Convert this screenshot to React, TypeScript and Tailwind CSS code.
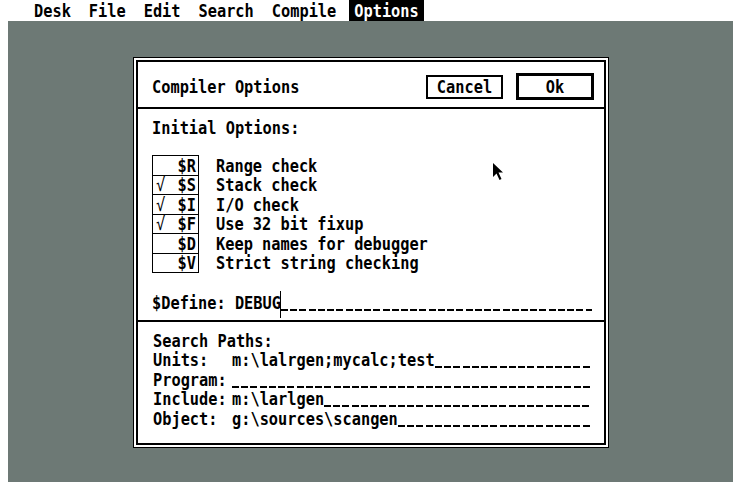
const mono = "font-['DejaVu_Sans_Mono','Liberation_Mono',monospace] font-bold";

const menuItems = ['Desk', 'File', 'Edit', 'Search', 'Compile', 'Options'];

const switches = [
  { code: '$R', label: 'Range check', on: false },
  { code: '$S', label: 'Stack check', on: true },
  { code: '$I', label: 'I/O check', on: true },
  { code: '$F', label: 'Use 32 bit fixup', on: true },
  { code: '$D', label: 'Keep names for debugger', on: false },
  { code: '$V', label: 'Strict string checking', on: false },
];

const paths = [
  { label: 'Units:', value: 'm:\\lalrgen;mycalc;test' },
  { label: 'Program:', value: '' },
  { label: 'Include:', value: 'm:\\larlgen' },
  { label: 'Object:', value: 'g:\\sources\\scangen' },
];

// atari system font is taller than it is wide
function T({ children, className = '' }: { children: React.ReactNode; className?: string }) {
  return <span className={`inline-block whitespace-pre scale-y-[1.18] translate-y-[1px] ${className}`}>{children}</span>;
}

function Field({ value, cursor }: { value: string; cursor?: boolean }) {
  return (
    <div className="relative flex-1 flex">
      {value && <T>{value}</T>}
      {cursor && <span className="absolute left-[45px] top-[-2px] h-[27px] w-px bg-black" />}
      <span className="flex-1 h-[19.4px] bg-no-repeat bg-[length:100%_2px] bg-[position:0_16px] bg-[repeating-linear-gradient(90deg,#000_0_7px,transparent_7px_9.23px)]" />
    </div>
  );
}

function Pointer() {
  return (
    <svg className="absolute left-[358px] top-[104px]" width="12" height="20" viewBox="0 0 12 20">
      <path d="M1 1 L1 15 L4.5 11.5 L7.5 18 L9.5 17 L6.5 10.5 L11 10.5 Z" fill="black" />
    </svg>
  );
}

export default function App() {
  return (
    <div className={`w-[741px] h-[488px] bg-white overflow-hidden text-black ${mono} text-[15.3px] leading-[19.4px]`}>
      <div className="h-[21px] flex items-center pl-[29px]">
        {menuItems.map((m) => (
          <span
            key={m}
            className={`px-[5px] h-[21px] flex items-center mr-[8px] ${m === 'Options' ? 'bg-black text-white' : ''}`}
          >
            <T>{m}</T>
          </span>
        ))}
      </div>

      <div className="mx-[8px] h-[461px] bg-[#6d7975] pl-[125px] pt-[36px]">
        <div className="relative w-[476px] h-[391px] border border-black bg-white p-[2px]">
          <div className="h-full flex flex-col border-2 border-black">
            <div className="h-[47px] shrink-0 flex items-center justify-between pl-[14px] pr-[10px] pt-[4px] border-b-2 border-black">
              <T>Compiler Options</T>
              <div className="flex items-center gap-[13px]">
                <button className="w-[77px] h-[24px] border-2 border-black flex items-center justify-center">
                  <T>Cancel</T>
                </button>
                <button className="w-[78px] h-[27px] border-[3px] border-black flex items-center justify-center">
                  <T>Ok</T>
                </button>
              </div>
            </div>

            <div className="h-[213px] shrink-0 border-b-2 border-black pl-[14px] pr-[12px] pt-[9px]">
              <div>
                <T>Initial Options:</T>
              </div>
              <div className="mt-[18px] flex flex-col">
                {switches.map((s, i) => (
                  <div key={s.code} className={`flex items-center ${i > 0 ? '-mt-px' : ''}`}>
                    <div className="w-[47px] h-[20.5px] border border-black flex items-center justify-between pl-[3px] pr-[2px]">
                      <T className="font-normal">{s.on ? '√' : ''}</T>
                      <T>{s.code}</T>
                    </div>
                    <T className="ml-[17px]">{s.label}</T>
                  </div>
                ))}
              </div>
              <div className="mt-[20px] flex">
                <T>$Define: </T>
                <Field value="DEBUG" cursor />
              </div>
            </div>

            <div className="flex-1 pl-[15px] pr-[14px] pt-[9px]">
              <div>
                <T>Search Paths:</T>
              </div>
              {paths.map((p) => (
                <div key={p.label} className="flex">
                  <T className="w-[79px]">{p.label}</T>
                  <Field value={p.value} />
                </div>
              ))}
            </div>
          </div>
          <Pointer />
        </div>
      </div>
    </div>
  );
}
